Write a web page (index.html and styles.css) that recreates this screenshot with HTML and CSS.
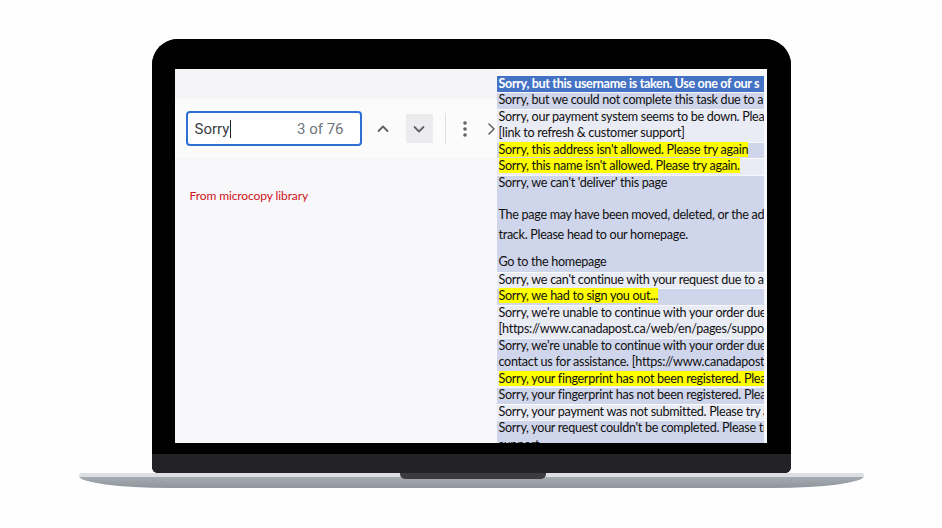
FILE: index.html
```html
<!DOCTYPE html>
<html lang="en">
<head>
<meta charset="utf-8">
<title>Microcopy search</title>
<link rel="stylesheet" href="styles.css">
</head>
<body>
<div class="stage">
  <div class="laptop">
    <div class="lid">
      <div class="bezel">
        <div class="screen">
          <div class="leftcol">
            <div class="topband"></div>
            <div class="findbar">
              <div class="findinput">
                <span class="query">Sorry<span class="caret"></span></span>
                <span class="count">3 of 76</span>
              </div>
              <div class="iconbtn up">
                <svg width="14" height="14" viewBox="0 0 14 14"><polyline points="2.5,9 7,4.5 11.5,9" fill="none" stroke="#5f6368" stroke-width="1.8" stroke-linecap="round" stroke-linejoin="round"/></svg>
              </div>
              <div class="iconbtn down">
                <svg width="14" height="14" viewBox="0 0 14 14"><polyline points="2.5,5 7,9.5 11.5,5" fill="none" stroke="#5f6368" stroke-width="1.8" stroke-linecap="round" stroke-linejoin="round"/></svg>
              </div>
              <div class="sep"></div>
              <div class="iconbtn kebab">
                <svg width="6" height="18" viewBox="0 0 6 18"><circle cx="3" cy="3" r="1.8" fill="#5f6368"/><circle cx="3" cy="9" r="1.8" fill="#5f6368"/><circle cx="3" cy="15" r="1.8" fill="#5f6368"/></svg>
              </div>
              <div class="peek">
                <svg width="10" height="14" viewBox="0 0 10 14"><polyline points="2,2 7,7 2,12" fill="none" stroke="#5f6368" stroke-width="1.6" stroke-linecap="round" stroke-linejoin="round"/></svg>
              </div>
            </div>
            <div class="note">From microcopy library</div>
          </div>
          <div class="panel">
            <div class="row head">Sorry, but this username is taken. Use one of our s</div>
            <div class="row dark">Sorry, but we could not complete this task due to a</div>
            <div class="row light">Sorry, our payment system seems to be down. Pleas<br>[link to refresh &amp; customer support]</div>
            <div class="row dark"><span class="hl">Sorry, this address isn't allowed. Please try again</span></div>
            <div class="row light"><span class="hl">Sorry, this name isn't allowed. Please try again.</span></div>
            <div class="row dark tall">
              <div class="p1">Sorry, we can't 'deliver' this page</div>
              <div class="p2">The page may have been moved, deleted, or the add<br>track. Please head to our homepage.</div>
              <div class="p3">Go to the homepage</div>
            </div>
            <div class="row light">Sorry, we can't continue with your request due to a</div>
            <div class="row dark"><span class="hl">Sorry, we had to sign you out...</span></div>
            <div class="row light">Sorry, we're unable to continue with your order due<br>[https://www.canadapost.ca/web/en/pages/suppor</div>
            <div class="row dark">Sorry, we're unable to continue with your order due<br>contact us for assistance. [https://www.canadapost.</div>
            <div class="row light"><span class="hl full">Sorry, your fingerprint has not been registered. Plea</span></div>
            <div class="row dark">Sorry, your fingerprint has not been registered. Plea</div>
            <div class="row light">Sorry, your payment was not submitted. Please try a</div>
            <div class="row dark">Sorry, your request couldn't be completed. Please tr<br>support</div>
          </div>
        </div>
      </div>
      <div class="chin"></div>
    </div>
    <div class="base"><div class="notch"></div></div>
  </div>
</div>
</body>
</html>
```
FILE: styles.css
```css
html, body {
  margin: 0;
  padding: 0;
  background: #fefefe;
}
.stage {
  width: 942px;
  height: 528px;
  display: flex;
  justify-content: center;
  padding-top: 39px;
  box-sizing: border-box;
}
.laptop {
  display: flex;
  flex-direction: column;
  align-items: center;
}
.lid {
  width: 639px;
  display: flex;
  flex-direction: column;
  border-radius: 26px 26px 6px 6px;
  overflow: hidden;
  background: #000;
}
.bezel {
  padding: 30px 24px 11px 23px;
  background: #000;
}
.chin {
  height: 19px;
  background: #232226;
}
.screen {
  width: 592px;
  height: 374px;
  background: #f8f7fa;
  display: flex;
  overflow: hidden;
}
.leftcol {
  width: 322px;
  flex: none;
  overflow: hidden;
  display: flex;
  flex-direction: column;
  background: #f8f7fa;
}
.topband {
  height: 30px;
  background: #f5f4f8;
}
.findbar {
  height: 59px;
  background: #fbfbfc;
  display: flex;
  align-items: center;
  padding-left: 11px;
}
.findinput {
  width: 176px;
  height: 35px;
  box-sizing: border-box;
  border: 2px solid #2d6fd2;
  border-radius: 4px;
  background: #fff;
  display: flex;
  align-items: center;
  justify-content: space-between;
  padding: 0 16px 0 7px;
  font-family: Roboto, "Noto Sans", sans-serif;
  font-size: 15px;
  flex: none;
}
.query {
  color: #3c4043;
  display: flex;
  align-items: center;
}
.caret {
  display: inline-block;
  width: 1px;
  height: 18px;
  background: #202124;
  margin-left: 1px;
}
.count {
  color: #70757a;
}
.iconbtn {
  width: 28px;
  height: 29px;
  display: flex;
  align-items: center;
  justify-content: center;
  flex: none;
}
.iconbtn.up {
  margin-left: 7px;
}
.iconbtn.down {
  margin-left: 9px;
  background: #ececef;
  width: 27px;
}
.sep {
  width: 1px;
  height: 31px;
  background: #dedee2;
  margin-left: 12px;
  flex: none;
}
.iconbtn.kebab {
  margin-left: 5px;
}
.peek {
  margin-left: 8px;
  display: flex;
  align-items: center;
  flex: none;
}
.note {
  margin: 30px 0 0 15px;
  color: #d0121b;
  font-family: Lato, "Liberation Sans", sans-serif;
  font-size: 12px;
  letter-spacing: -0.1px;
  line-height: 16px;
}
.panel {
  width: 267px;
  flex: none;
  margin-top: 7px;
  overflow: hidden;
  font-family: Lato, "Liberation Sans", sans-serif;
  font-size: 12.6px;
  letter-spacing: -0.3px;
  color: #111;
}
.row {
  white-space: nowrap;
  overflow: hidden;
  line-height: 16.5px;
  padding-left: 2px;
  box-shadow: inset 0 1px 0 rgba(255,255,255,0.8);
}
.row.head {
  background: #4472c4;
  color: #fff;
  font-weight: 700;
  line-height: 16px;
  box-shadow: none;
  letter-spacing: -0.35px;
}
.row.dark {
  background: #cfd5ea;
}
.row.light {
  background: #e9ebf5;
}
.hl {
  background: #ffff00;
}
.row.tall .p1 {
  line-height: 16.5px;
  margin-bottom: 14px;
}
.row.tall .p2 {
  line-height: 20px;
  margin-bottom: 9px;
}
.row.tall .p3 {
  line-height: 16.5px;
  padding-bottom: 1px;
}
.base {
  width: 785px;
  height: 15px;
  box-sizing: border-box;
  border-top: 4px solid #dcdee1;
  background: linear-gradient(#a6abb1, #8e959c);
  border-radius: 2px 2px 90px 90px / 2px 2px 12px 12px;
  display: flex;
  justify-content: center;
}
.notch {
  width: 146px;
  height: 6px;
  margin-top: -4px;
  margin-left: 3px;
  background: #3c3b40;
  border-radius: 0 0 5px 5px;
}
```
